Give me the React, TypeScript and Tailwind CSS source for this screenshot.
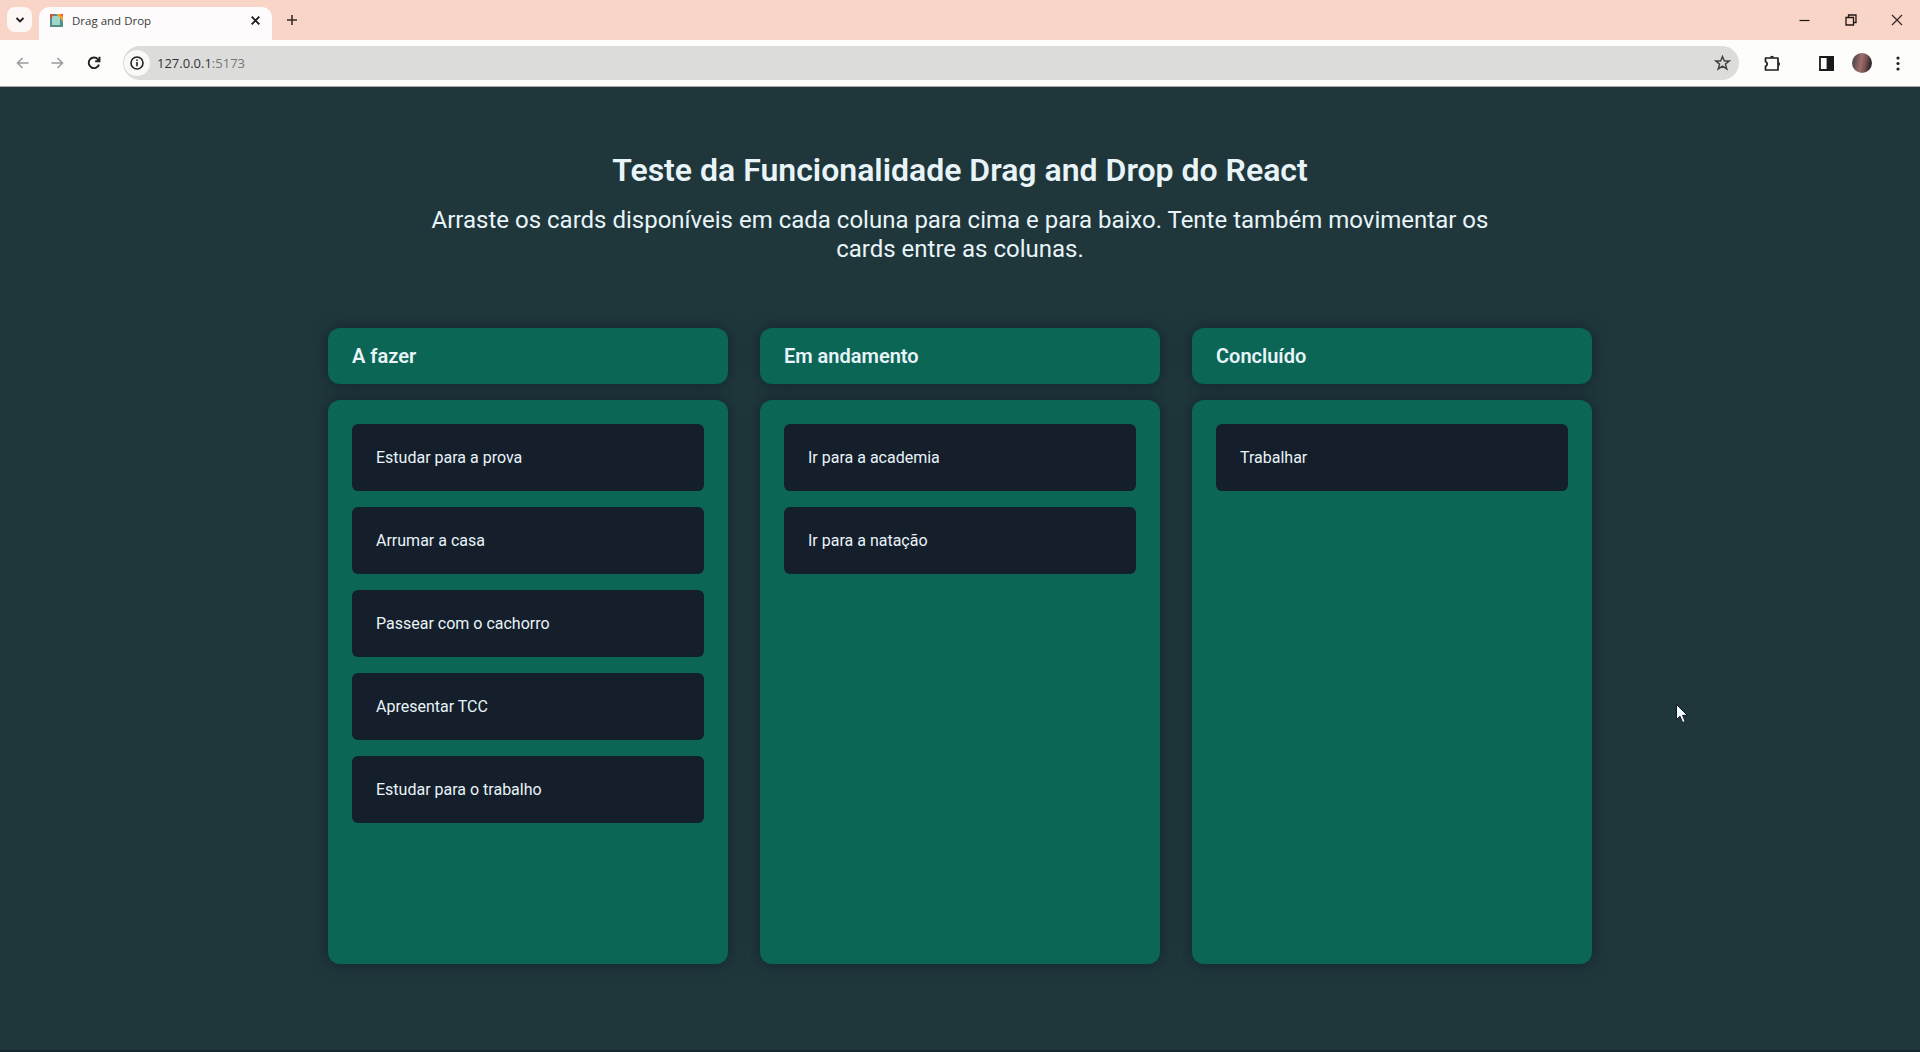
import React from 'react';

const columns = [
  {
    title: 'A fazer',
    cards: ['Estudar para a prova', 'Arrumar a casa', 'Passear com o cachorro', 'Apresentar TCC', 'Estudar para o trabalho'],
  },
  { title: 'Em andamento', cards: ['Ir para a academia', 'Ir para a natação'] },
  { title: 'Concluído', cards: ['Trabalhar'] },
];

function TabStrip() {
  return (
    <div className="flex h-10 items-start bg-[#f9d5c7]">
      <div className="ml-[7px] mt-[7px] flex h-[25px] w-[25px] items-center justify-center rounded-lg bg-[#fdf8f6]">
        <svg width="10" height="8" viewBox="0 0 10 8" fill="none" stroke="#222" strokeWidth="1.9">
          <path d="M1.5 2 5 5.5 8.5 2" />
        </svg>
      </div>
      <div className="ml-[7px] mt-[7px] flex h-[33px] w-[233px] items-start rounded-t-[10px] bg-[#fdfbfb] pl-[11px] pt-[7px]">
        <svg width="13" height="13" viewBox="0 0 13 13" className="shrink-0">
          <rect width="13" height="13" fill="#4f8f87" />
          <rect x="2" y="2" width="8" height="9" fill="#9fd6cb" />
          <path d="M6 0H13V8L10 4Z" fill="#f0a52c" />
          <path d="M10 0H13V3Z" fill="#e8532c" />
          <path d="M0 0H4L0 6Z" fill="#d1583f" />
        </svg>
        <span className="ml-[9px] -mt-px w-[179px] text-[11.5px] leading-[16px] text-[#3a3a3a]">Drag and Drop</span>
        <svg width="9" height="9" viewBox="0 0 9 9" className="mt-[2px] shrink-0" stroke="#1c1c1c" strokeWidth="1.9">
          <path d="M.7.7 8.3 8.3M8.3.7.7 8.3" />
        </svg>
      </div>
      <svg width="10" height="10" viewBox="0 0 10 10" className="ml-[15px] mt-[15px]" stroke="#3a2c28" strokeWidth="1.6">
        <path d="M5 0V10M0 5H10" />
      </svg>
      <div className="ml-auto mr-[17px] mt-[14px] flex items-center">
        <svg width="11" height="12" viewBox="0 0 11 12" className="mr-px" stroke="#221512" strokeWidth="1.2">
          <path d="M.5 6.5H10.5" />
        </svg>
        <svg width="12" height="12" viewBox="0 0 12 12" className="ml-[34px]" fill="none" stroke="#221512" strokeWidth="1.3">
          <path d="M1 3.5H8.5V11H1ZM3.5 3.3V1H11V8.5H8.7" />
        </svg>
        <svg width="12" height="12" viewBox="0 0 12 12" className="ml-[34px]" stroke="#3a2926" strokeWidth="1.3">
          <path d="M1 1 11 11M11 1 1 11" />
        </svg>
      </div>
    </div>
  );
}

function Toolbar() {
  return (
    <div className="flex h-[47px] items-center border-b border-[#a9aaa8] bg-[#fdfdfb] pl-4 pr-5">
      <svg width="13" height="12" viewBox="0 0 13 12" fill="none" stroke="#999a9c" strokeWidth="1.5">
        <path d="M6.5 1 1.5 6 6.5 11M1.5 6H12.5" />
      </svg>
      <svg width="13" height="12" viewBox="0 0 13 12" className="ml-[22px]" fill="none" stroke="#999a9c" strokeWidth="1.5">
        <path d="M6.5 1 11.5 6 6.5 11M11.5 6H.5" />
      </svg>
      <svg width="14" height="14" viewBox="0 0 14 14" className="ml-[23px]" fill="none" stroke="#222" strokeWidth="1.9">
        <path d="M12 8.6A5.3 5.3 0 1 1 11 3.3L12 4.6" />
        <path d="M12.5.8V5.2H8.2" />
      </svg>
      <div className="ml-[22px] flex h-[34px] w-[1616px] items-center rounded-full bg-[#dcdddb] pl-[1px]">
        <div className="flex h-[26px] w-[26px] items-center justify-center rounded-full bg-[#f9f9f7]">
          <svg width="14" height="14" viewBox="0 0 14 14" fill="none" stroke="#222" strokeWidth="1.6">
            <circle cx="7" cy="7" r="6" />
            <path d="M7 6V10.3M7 3.4V5" />
          </svg>
        </div>
        <span className="ml-[7px] text-[13px] leading-[18px] text-[#333]">
          127.0.0.1<span className="text-[#777]">:5173</span>
        </span>
        <svg width="17" height="16" viewBox="0 0 17 16" className="ml-auto mr-[8px]" fill="none" stroke="#444" strokeWidth="1.5">
          <path d="M8.5 1.5 10.4 6H15.3L11.4 9.1 12.8 14 8.5 11.2 4.2 14 5.6 9.1 1.7 6H6.6Z" />
        </svg>
      </div>
      <svg width="17" height="17" viewBox="0 0 17 17" className="ml-[25px]" fill="none" stroke="#1d1d1d" strokeWidth="1.7" strokeLinejoin="round">
        <path d="M1.5 3H14V15H1.5V11.5Q5 9 1.5 6.5Z" />
        <path d="M5.5 2.5Q8 -.8 10.5 2.5ZM14.5 6.5Q17.6 9 14.5 11.5Z" fill="#1d1d1d" stroke="none" />
      </svg>
      <svg width="15" height="15" viewBox="0 0 15 15" className="ml-[38px]" fill="none" stroke="#1a1a1a" strokeWidth="1.8">
        <path d="M1 1H14V14H1Z" />
        <path d="M8.5 1H14V14H8.5Z" fill="#1a1a1a" />
      </svg>
      <div className="ml-[18px] h-5 w-5 rounded-full bg-[linear-gradient(100deg,#5a4d50_15%,#a06d6b_45%,#7a5355_65%,#352c2d_85%)]" />
      <svg width="4" height="15" viewBox="0 0 4 15" className="ml-auto" fill="#222">
        <circle cx="2" cy="2" r="1.6" />
        <circle cx="2" cy="7.5" r="1.6" />
        <circle cx="2" cy="13" r="1.6" />
      </svg>
    </div>
  );
}

export default function App() {
  return (
    <div className="relative flex h-[1052px] w-[1920px] flex-col overflow-hidden bg-[#1f373b] font-['Roboto',sans-serif]">
      <div className="font-['Open_Sans',sans-serif]">
        <TabStrip />
        <Toolbar />
      </div>
      <main className="flex flex-1 flex-col items-center border-b-2 border-[#142830] pt-16 text-[#e8f4f8]">
        <h1 className="text-[32px] font-semibold leading-[38px]">Teste da Funcionalidade Drag and Drop do React</h1>
        <p className="mt-[17px] w-[1100px] text-center text-[24px] leading-[29px]">
          Arraste os cards disponíveis em cada coluna para cima e para baixo. Tente também movimentar os cards entre as colunas.
        </p>
        <div className="mt-[64px] flex gap-8">
          {columns.map((column) => (
            <section key={column.title} className="flex w-[400px] flex-col gap-4">
              <h2 className="flex h-14 items-center rounded-xl bg-[#0b6655] px-6 text-[20px] font-semibold shadow-[0_0_16px_rgba(10,18,32,0.5)]">
                {column.title}
              </h2>
              <div className="flex h-[564px] flex-col gap-4 rounded-xl bg-[#0b6655] p-6 shadow-[0_0_16px_rgba(10,18,32,0.5)]">
                {column.cards.map((card) => (
                  <div key={card} className="flex h-[67px] items-center rounded-md bg-[#151e2b] px-6 text-[16px]">
                    {card}
                  </div>
                ))}
              </div>
            </section>
          ))}
        </div>
      </main>
      <svg width="12" height="20" viewBox="0 0 12 20" className="absolute left-[1676px] top-[704px]">
        <path d="M.5.5V15.5L4 12.2 6.6 18.6 9.2 17.5 6.6 11.3H11.3Z" fill="#f4fbff" stroke="#0c1a22" strokeWidth="1" />
      </svg>
    </div>
  );
}
